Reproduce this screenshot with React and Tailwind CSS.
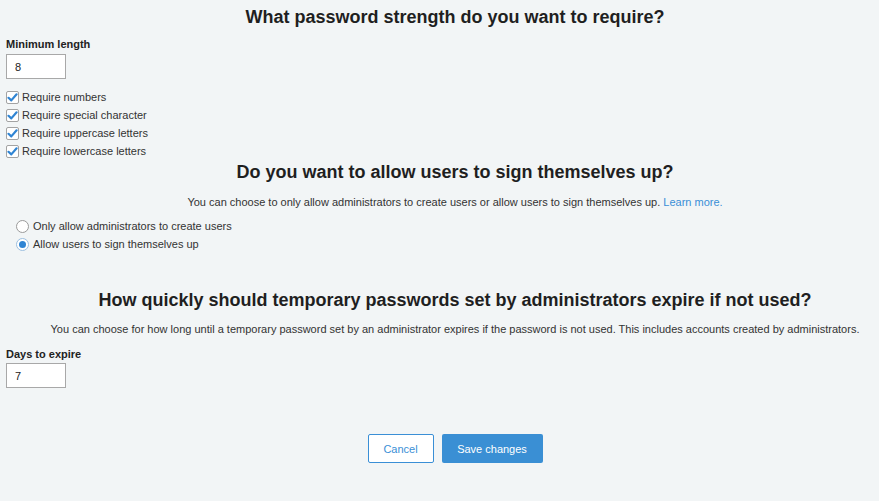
import React, { useState } from 'react';

function Check({ label, checked, onChange }) {
  return (
    <label className="flex items-center h-[18px] cursor-pointer">
      <span
        onClick={onChange}
        className="w-[13px] h-[13px] bg-white border border-[#a3a3a3] rounded-[2px] flex items-center justify-center"
      >
        {checked && (
          <svg width="11" height="11" viewBox="0 0 11 11">
            <path d="M1.5 5.8 L4.3 8.4 L9.6 2.3" fill="none" stroke="#2f84d3" strokeWidth="2.2" strokeLinecap="round" strokeLinejoin="round" />
          </svg>
        )}
      </span>
      <span className="ml-[3px]">{label}</span>
    </label>
  );
}

function Radio({ label, checked, onClick }) {
  return (
    <div className="flex items-center h-[18px] pl-[10px] cursor-pointer" onClick={onClick}>
      <span
        className={`w-[13px] h-[13px] rounded-full bg-white border flex items-center justify-center ${
          checked ? 'border-[#9cbfe0]' : 'border-[#9a9a9a]'
        }`}
      >
        {checked && <span className="w-[7px] h-[7px] rounded-full bg-[#2f84d3]" />}
      </span>
      <span className="ml-[4px]">{label}</span>
    </div>
  );
}

export default function App() {
  const [checks, setChecks] = useState({ numbers: true, special: true, upper: true, lower: true });
  const [signUp, setSignUp] = useState('users');
  const [minLength, setMinLength] = useState('8');
  const [days, setDays] = useState('7');

  const toggle = (key) => setChecks({ ...checks, [key]: !checks[key] });

  return (
    <div
      className="w-full h-screen overflow-hidden bg-[#f2f5f6] text-[#333] text-[11px] leading-[14px]"
      style={{ fontFamily: '"Liberation Sans", Arial, sans-serif' }}
    >
      <div className="pl-[6px]">
        <div className="w-[898px]">
          {/* Password strength */}
          <h1 className="h-[34px] leading-[34px] text-center text-[18px] font-bold text-[#1f1f1f]">
            What password strength do you want to require?
          </h1>
          <div className="mt-[3px] font-bold text-[#222]">Minimum length</div>
          <input
            value={minLength}
            onChange={(e) => setMinLength(e.target.value)}
            className="mt-[3px] block w-[60px] h-[25px] bg-white border border-[#a8a8a8] px-[8px] text-[11px] text-[#222] outline-none"
          />
          <div className="mt-[9px]">
            <Check label="Require numbers" checked={checks.numbers} onChange={() => toggle('numbers')} />
            <Check label="Require special character" checked={checks.special} onChange={() => toggle('special')} />
            <Check label="Require uppercase letters" checked={checks.upper} onChange={() => toggle('upper')} />
            <Check label="Require lowercase letters" checked={checks.lower} onChange={() => toggle('lower')} />
          </div>

          {/* Sign up */}
          <h2 className="h-[24px] leading-[24px] text-center text-[18px] font-bold text-[#1f1f1f]">
            Do you want to allow users to sign themselves up?
          </h2>
          <p className="mt-[11px] text-center">
            You can choose to only allow administrators to create users or allow users to sign themselves up.{' '}
            <a href="#" className="text-[#3a8fd6]">Learn more.</a>
          </p>
          <div className="mt-[8px]">
            <Radio label="Only allow administrators to create users" checked={signUp === 'admins'} onClick={() => setSignUp('admins')} />
            <Radio label="Allow users to sign themselves up" checked={signUp === 'users'} onClick={() => setSignUp('users')} />
          </div>

          {/* Temporary passwords */}
          <h2 className="mt-[35px] h-[24px] leading-[24px] text-center text-[18px] font-bold text-[#1f1f1f]">
            How quickly should temporary passwords set by administrators expire if not used?
          </h2>
          <p className="mt-[10px] text-center">
            You can choose for how long until a temporary password set by an administrator expires if the password is not used. This includes accounts created by administrators.
          </p>
          <div className="mt-[11px] font-bold text-[#222]">Days to expire</div>
          <input
            value={days}
            onChange={(e) => setDays(e.target.value)}
            className="mt-[2px] block w-[60px] h-[25px] bg-white border border-[#a8a8a8] px-[8px] text-[11px] text-[#222] outline-none"
          />

          {/* Actions */}
          <div className="mt-[46px] flex justify-center gap-[8px]">
            <button className="w-[66px] h-[29px] bg-white border border-[#3a8fd6] text-[#3a8fd6] rounded-[2px] text-[11px]">
              Cancel
            </button>
            <button className="w-[101px] h-[29px] bg-[#3a8fd4] text-white rounded-[2px] text-[11px]">
              Save changes
            </button>
          </div>
        </div>
      </div>
    </div>
  );
}
